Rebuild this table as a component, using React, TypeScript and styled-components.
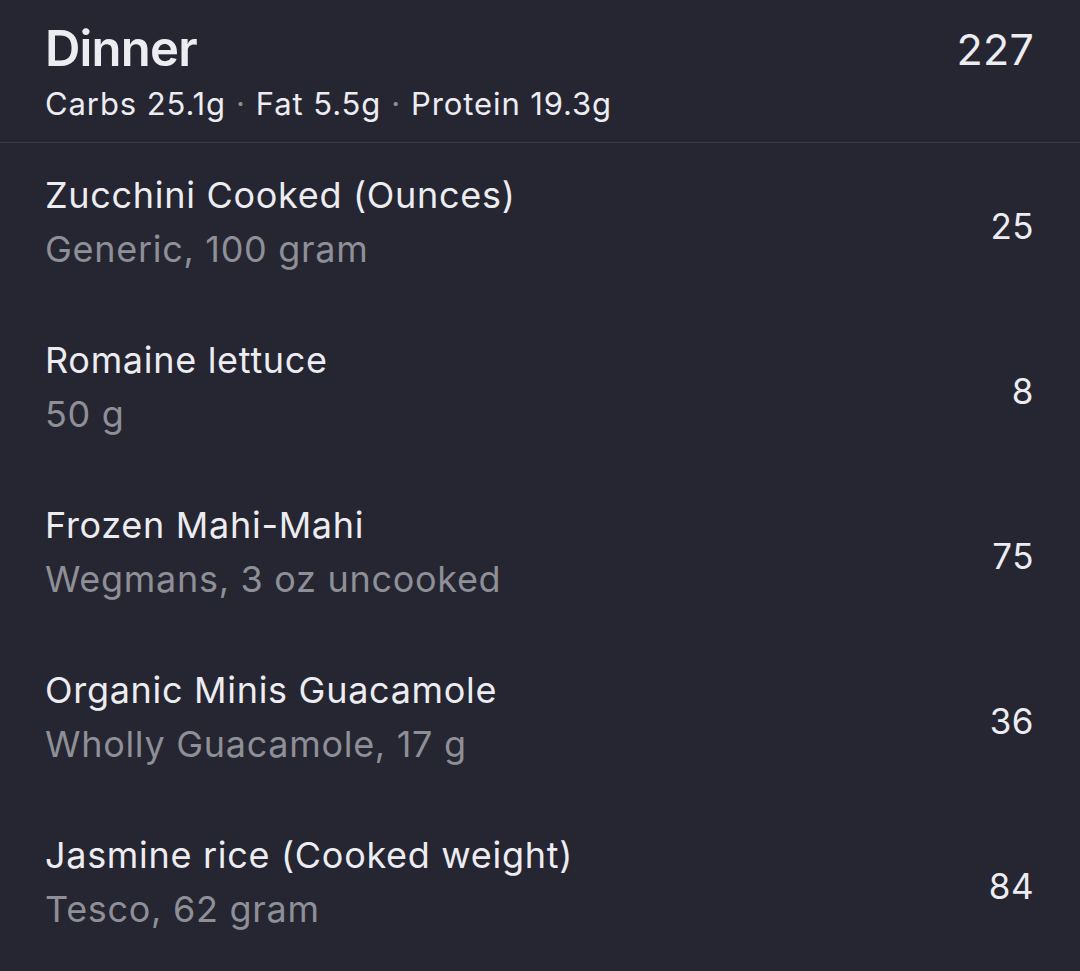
import React from "react";
import styled, { createGlobalStyle } from "styled-components";

const Global = createGlobalStyle`
  html, body {
    margin: 0;
    padding: 0;
    background: #252631;
  }
  body {
    font-family: Inter, "Noto Sans", "Liberation Sans", sans-serif;
    -webkit-font-smoothing: antialiased;
  }
`;

const Screen = styled.div`
  width: 1080px;
  height: 971px;
  background: #252631;
  overflow: hidden;
`;

const Header = styled.header`
  display: flex;
  justify-content: space-between;
  align-items: flex-start;
  padding: 19px 46px 0 45px;
  height: 143px;
  box-sizing: border-box;
  border-bottom: 1.5px solid #393a45;
`;

const HeaderText = styled.div`
  display: flex;
  flex-direction: column;
`;

const Title = styled.h1`
  margin: 0;
  font-size: 49px;
  line-height: 60px;
  font-weight: 600;
  color: #ececf1;
  letter-spacing: -0.8px;
`;

const Macros = styled.div`
  font-size: 31px;
  line-height: 40px;
  color: #ececf1;
  margin-top: 5px;
  letter-spacing: 0.9px;
`;

const Dot = styled.span`
  color: #8d8e96;
  margin: 0 10px;
`;

const Total = styled.div`
  font-size: 43px;
  line-height: 60px;
  color: #ececf1;
  font-weight: 400;
  letter-spacing: 0.2px;
`;

const List = styled.ul`
  list-style: none;
  margin: 0;
  padding: 0;
`;

const Row = styled.li`
  display: flex;
  align-items: center;
  justify-content: space-between;
  height: 165px;
  padding: 0 46px 0 45px;
  box-sizing: border-box;
`;

const Info = styled.div`
  display: flex;
  flex-direction: column;
  gap: 10px;
  margin-top: -7px;
`;

const Name = styled.div`
  font-size: 36px;
  line-height: 44px;
  color: #ececf1;
  letter-spacing: 0.7px;
`;

const Sub = styled.div`
  font-size: 36px;
  line-height: 44px;
  color: #8e8f97;
  letter-spacing: 0.7px;
`;

const Cal = styled.div`
  font-size: 35px;
  line-height: 44px;
  color: #ececf1;
  letter-spacing: 0.5px;
`;

const items = [
  { name: "Zucchini Cooked (Ounces)", sub: "Generic, 100 gram", cal: 25 },
  { name: "Romaine lettuce", sub: "50 g", cal: 8 },
  { name: "Frozen Mahi-Mahi", sub: "Wegmans, 3 oz uncooked", cal: 75 },
  { name: "Organic Minis Guacamole", sub: "Wholly Guacamole, 17 g", cal: 36 },
  { name: "Jasmine rice (Cooked weight)", sub: "Tesco, 62 gram", cal: 84 },
];

export default function App() {
  return (
    <Screen>
      <Global />
      <Header>
        <HeaderText>
          <Title>Dinner</Title>
          <Macros>
            Carbs 25.1g<Dot>·</Dot>Fat 5.5g<Dot>·</Dot>Protein 19.3g
          </Macros>
        </HeaderText>
        <Total>227</Total>
      </Header>
      <List>
        {items.map((it) => (
          <Row key={it.name}>
            <Info>
              <Name>{it.name}</Name>
              <Sub>{it.sub}</Sub>
            </Info>
            <Cal>{it.cal}</Cal>
          </Row>
        ))}
      </List>
    </Screen>
  );
}
